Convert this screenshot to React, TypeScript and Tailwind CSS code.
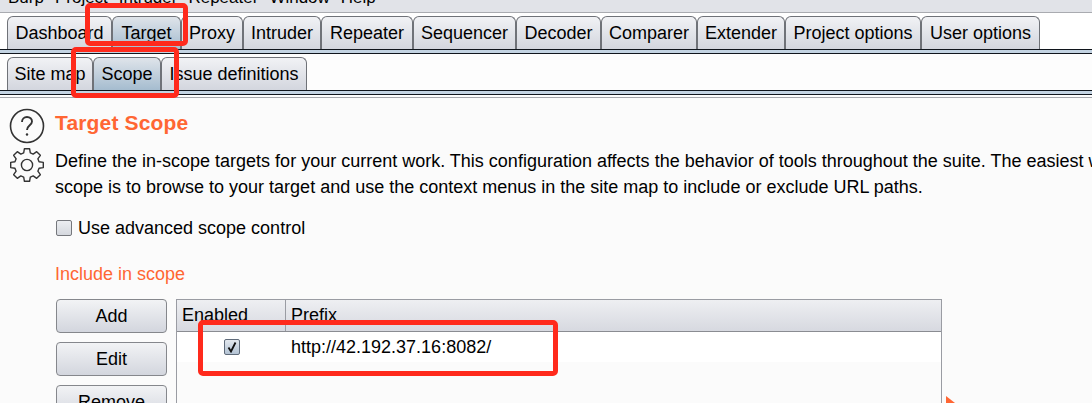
const font = "font-['Liberation_Sans',Arial,sans-serif]";

const mainTabs = [
  { label: "Dashboard", width: "w-[105px]" },
  { label: "Target", width: "w-[69px]", active: true },
  { label: "Proxy", width: "w-[62px]" },
  { label: "Intruder", width: "w-[78px]" },
  { label: "Repeater", width: "w-[92px]" },
  { label: "Sequencer", width: "w-[103px]" },
  { label: "Decoder", width: "w-[85px]" },
  { label: "Comparer", width: "w-[96px]" },
  { label: "Extender", width: "w-[88px]" },
  { label: "Project options", width: "w-[136px]" },
  { label: "User options", width: "w-[119px]" },
];

const subTabs = [
  { label: "Site map", width: "w-[86px]" },
  { label: "Scope", width: "w-[68px]", active: true },
  { label: "Issue definitions", width: "w-[146px]" },
];

type TabProps = { label: string; width: string; active?: boolean };

function Tab({ label, width, active }: TabProps) {
  return (
    <div
      className={`${width} h-[33px] flex items-center justify-center rounded-t-[6px] border border-b-0 border-[#6f7278] text-[18px] text-black whitespace-nowrap bg-gradient-to-b ${
        active ? "from-[#dfe4ea] to-[#a5bccf]" : "from-[#f1f2f5] to-[#d3d6de]"
      }`}
    >
      {label}
    </div>
  );
}

function TabBar({ tabs }: { tabs: TabProps[] }) {
  return (
    <div>
      <div className="flex pl-[7px]">
        {tabs.map((t) => (
          <Tab key={t.label} {...t} />
        ))}
      </div>
      <div className="h-[5px] bg-[#c3d3e2] border-y border-[#10151c]" />
    </div>
  );
}

function SideButton({ label }: { label: string }) {
  return (
    <div className="w-[111px] h-[34px] shrink-0 flex items-center justify-center rounded-[4px] border border-[#85878c] bg-gradient-to-b from-[#f2f3f5] to-[#d3d6de] text-[18px] text-black">
      {label}
    </div>
  );
}

// outline gear with 8 teeth, same look as the burp help/config icons
function gearPath() {
  const cx = 18;
  const cy = 18;
  const outer = 16.5;
  const inner = 12.5;
  const pts: string[] = [];
  for (let i = 0; i < 8; i++) {
    const a = (i * Math.PI) / 4 - Math.PI / 2;
    const step = Math.PI / 4;
    const corners = [
      [inner, a - step * 0.34],
      [outer, a - step * 0.2],
      [outer, a + step * 0.2],
      [inner, a + step * 0.34],
    ];
    for (const [r, t] of corners) {
      pts.push(`${(cx + r * Math.cos(t)).toFixed(2)} ${(cy + r * Math.sin(t)).toFixed(2)}`);
    }
  }
  return `M${pts.join("L")}Z`;
}

export default function App() {
  return (
    <div className={`relative w-[1092px] h-[403px] overflow-hidden bg-[#fbfbfb] ${font}`}>
      {/* menu bar, cut off at the top of the shot */}
      <div className="h-[13px] overflow-hidden bg-[#e1e3e8] border-b border-[#a9abb0] pl-[8px]">
        <div className="-mt-[12px] flex gap-[11px] text-[17px] leading-[20px] text-black">
          <span>Burp</span>
          <span>Project</span>
          <span>Intruder</span>
          <span>Repeater</span>
          <span>Window</span>
          <span>Help</span>
        </div>
      </div>

      <div className="bg-white pt-[3px]">
        <TabBar tabs={mainTabs} />
      </div>
      <div className="bg-[#fdfdfd] pt-[3px]">
        <TabBar tabs={subTabs} />
      </div>
      <div className="h-[3px] bg-[#fdfdfd] border-b border-[#a4a6ab]" />

      <div className="flex gap-[10px] pl-[9px] pt-[10px]">
        <div className="flex flex-col gap-[3px] shrink-0">
          <svg width="36" height="36" viewBox="0 0 36 36" fill="none" stroke="#333" strokeWidth="1.6">
            <circle cx="18" cy="18" r="16.5" />
            <path d="M13 14c0-3 2.2-5 5-5s5 2 5 4.6c0 3.6-5 4-5 8.4" strokeWidth="1.9" />
            <circle cx="18" cy="26.5" r="1.2" fill="#333" stroke="none" />
          </svg>
          <svg width="36" height="36" viewBox="0 0 36 36" fill="none" stroke="#333" strokeWidth="1.4" strokeLinejoin="round">
            <path d={gearPath()} />
            <circle cx="18" cy="18" r="5.6" />
          </svg>
        </div>
        <div className="min-w-0 flex-1">
          <div className="h-[30px] flex items-center text-[21px] font-bold text-[#ff6633] tracking-[0.15px]">
            Target Scope
          </div>
          <div className="mt-[10px] text-[18px] leading-[26px] text-black whitespace-nowrap">
            <p>
              Define the in-scope targets for your current work. This configuration affects the behavior of tools
              throughout the suite. The easiest way
            </p>
            <p>scope is to browse to your target and use the context menus in the site map to include or exclude URL paths.</p>
          </div>

          <div className="mt-[18px] ml-px flex items-center gap-[6px] h-[20px] text-[18px] text-black">
            <div className="w-[16px] h-[16px] rounded-[2px] border border-[#75777c] bg-gradient-to-b from-[#eceef1] to-[#d5d8de]" />
            Use advanced scope control
          </div>

          <div className="mt-[26px] h-[20px] flex items-center text-[18px] text-[#ff6633]">Include in scope</div>

          <div className="mt-[15px] ml-px flex gap-[9px]">
            <div className="flex flex-col gap-[9px]">
              <SideButton label="Add" />
              <SideButton label="Edit" />
              <SideButton label="Remove" />
            </div>
            <div className="w-[766px] h-[120px] shrink-0 border border-[#9a9ca3] border-b-0 bg-[#fbfbfb]">
              <div className="flex h-[32px] border-b border-[#8a8c92] bg-gradient-to-b from-[#eeeff2] to-[#d7d9e0] text-[18px] text-black">
                <div className="w-[109px] pl-[5px] flex items-center border-r border-[#9a9ca3]">Enabled</div>
                <div className="pl-[5px] flex items-center">Prefix</div>
              </div>
              <div className="flex h-[30px] bg-white text-[18px] text-black">
                <div className="w-[109px] flex items-center justify-center">
                  <div className="w-[16px] h-[16px] rounded-[2px] border border-[#5f6b7a] bg-gradient-to-b from-[#e3e8ee] to-[#b3c3d4] flex items-center justify-center">
                    <svg width="12" height="12" viewBox="0 0 12 12" fill="none" stroke="#111" strokeWidth="1.8">
                      <path d="M2.5 6.5 5 10.5 9.5 1.5" />
                    </svg>
                  </div>
                </div>
                <div className="pl-[5px] flex items-center">http://42.192.37.16:8082/</div>
              </div>
            </div>
          </div>
        </div>
      </div>

      {/* red annotation boxes drawn over the shot */}
      <div className="absolute left-[85px] top-[3px] w-[103px] h-[43px] border-[5px] border-[#ff2a1c] rounded-[5px]" />
      <div className="absolute left-[71px] top-[47px] w-[108px] h-[51px] border-[5px] border-[#ff2a1c] rounded-[5px]" />
      <div className="absolute left-[198px] top-[320px] w-[360px] h-[56px] border-[5px] border-[#ff2a1c] rounded-[5px]" />

      {/* orange marker at the table's right edge */}
      <svg className="absolute left-[946px] top-[396px]" width="9" height="7" viewBox="0 0 9 7" fill="#ff6633">
        <path d="M0 0 9 7H0z" />
      </svg>
    </div>
  );
}
